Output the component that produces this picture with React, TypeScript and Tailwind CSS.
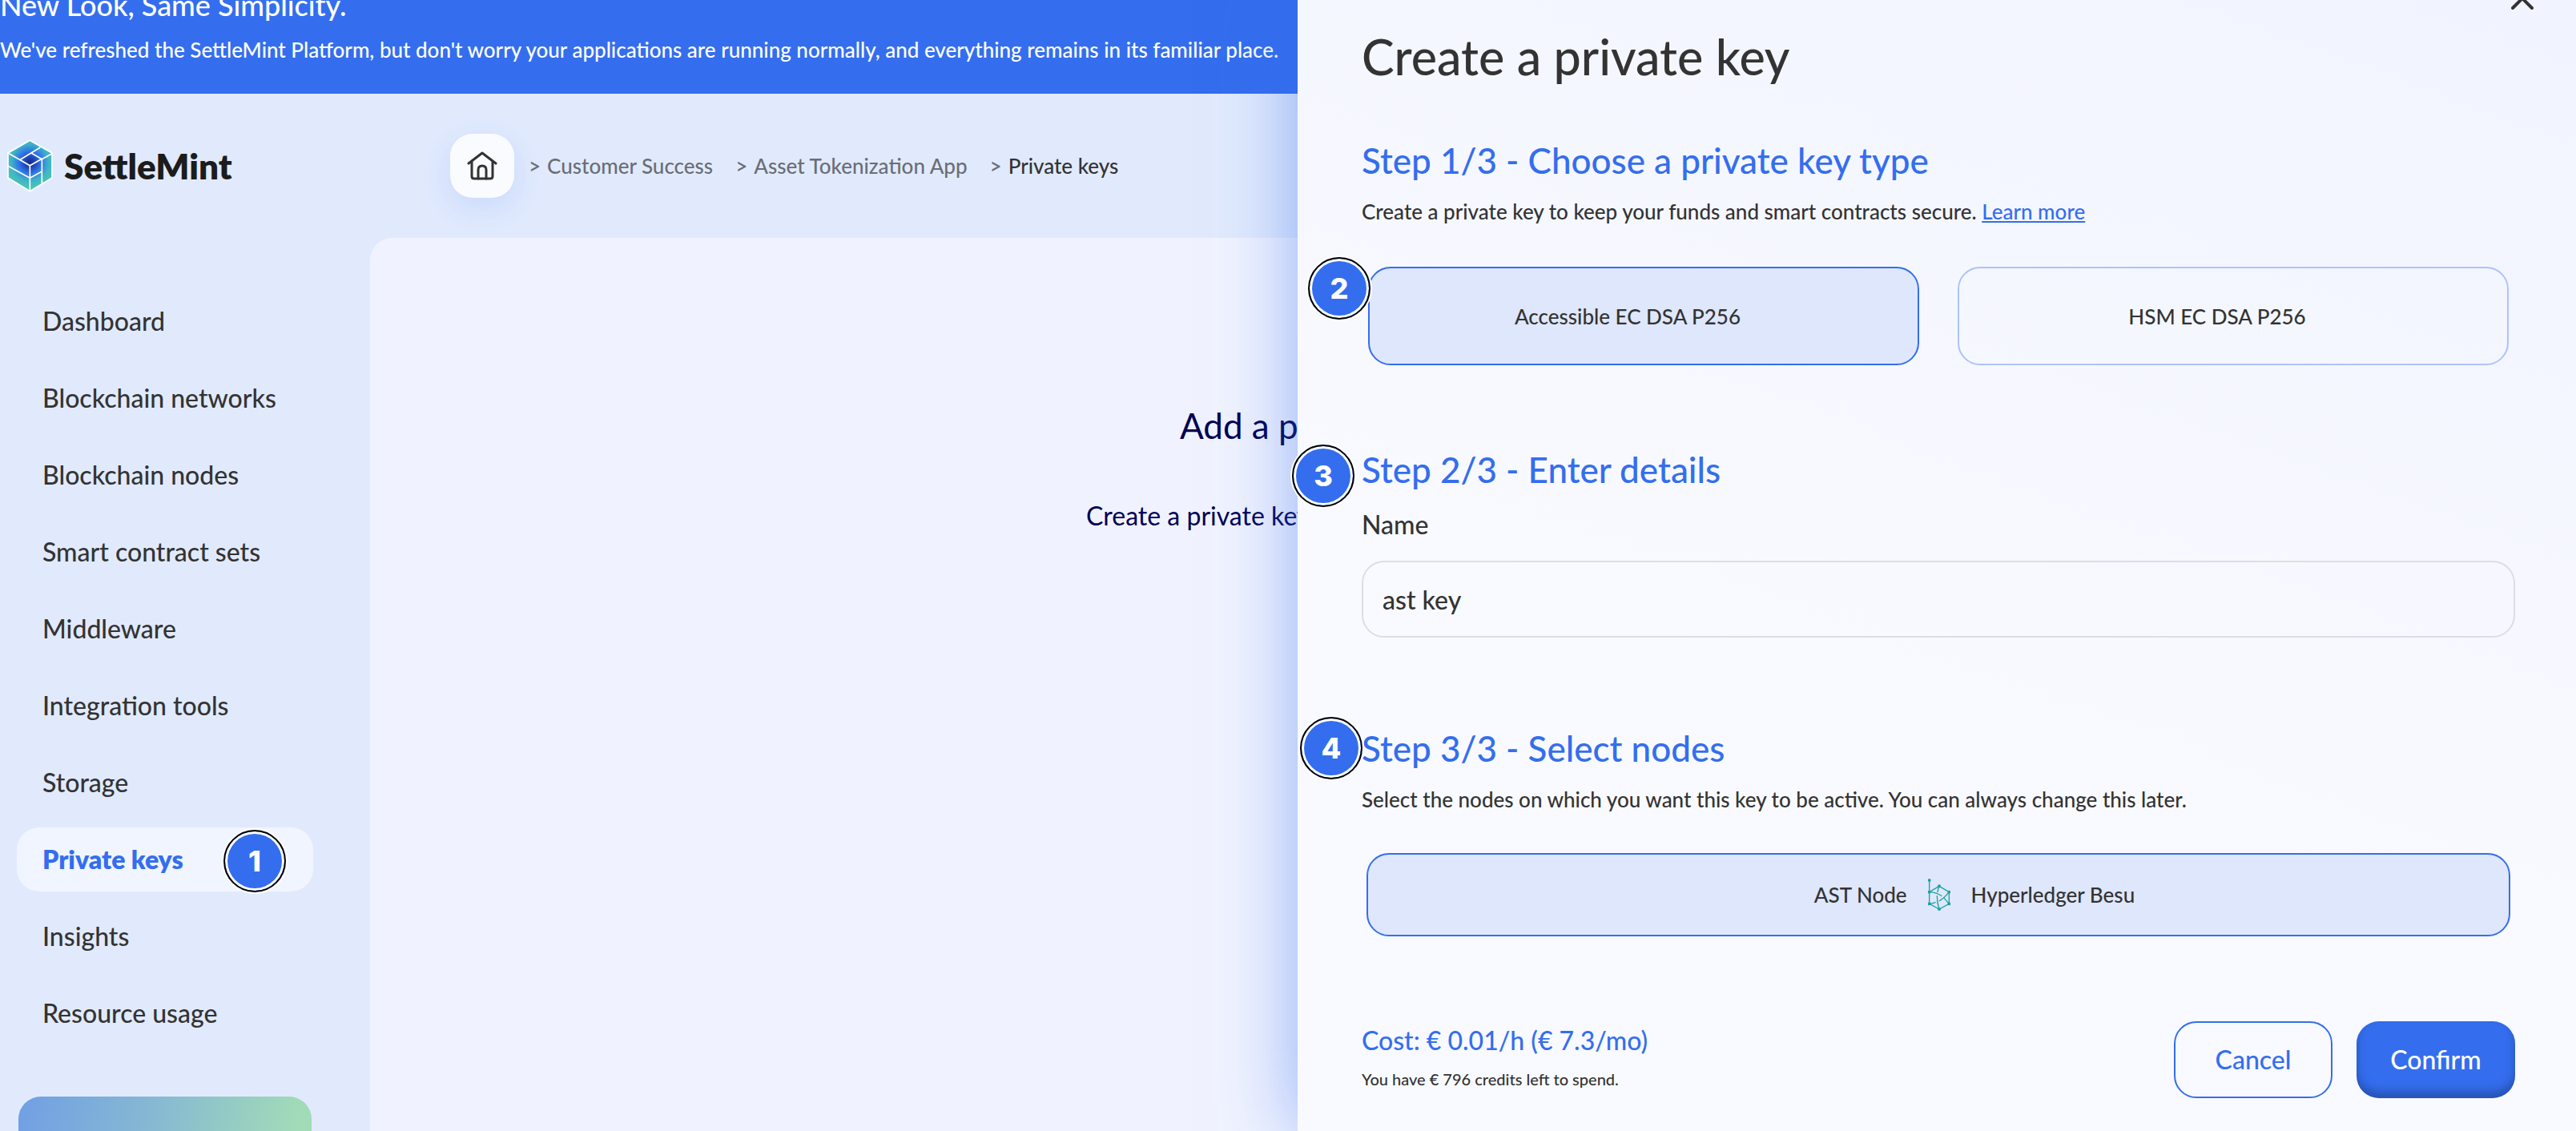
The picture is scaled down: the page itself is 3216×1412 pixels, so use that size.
import { useState } from "react";
import type { ReactNode } from "react";

const NAV = [
  "Dashboard",
  "Blockchain networks",
  "Blockchain nodes",
  "Smart contract sets",
  "Middleware",
  "Integration tools",
  "Storage",
  "Private keys",
  "Insights",
  "Resource usage",
];

function Badge({ n, className }: { n: number; className: string }) {
  return (
    <span
      className={`absolute z-10 flex size-[78px] items-center justify-center rounded-full border-2 border-black bg-[#346eee] font-[Inter,sans-serif] text-[36px] font-extrabold leading-none text-white shadow-[inset_0_0_0_3px_#fff,0_0_0_2px_#fff] ${className}`}
    >
      {n}
    </span>
  );
}

function LogoMark() {
  return (
    <svg viewBox="28 42 171 198" className="h-[66px] w-[57px]" aria-hidden="true">
      <defs>
        <radialGradient id="mark" gradientUnits="userSpaceOnUse" cx="113" cy="128" r="100">
          <stop offset="0" stopColor="#172a86" />
          <stop offset="0.2" stopColor="#1f46b8" />
          <stop offset="0.42" stopColor="#2f74e8" />
          <stop offset="0.7" stopColor="#3fb4c8" />
          <stop offset="1" stopColor="#4cc9ae" />
        </radialGradient>
      </defs>
      <path d="M113 46 196 93V186L113 236 31 186V93Z" fill="url(#mark)" />
      <g fill="none" stroke="#fff" strokeWidth="5" strokeLinejoin="round">
        <path d="M113 46 196 93V186L113 236 31 186V93Z" />
        <path d="M31 93 113 140 158 115V208M113 140V236M77 118 152 72M118 93 158 116 196 95M31 142 113 187 158 162" />
      </g>
    </svg>
  );
}

function HomeIcon() {
  return (
    <svg viewBox="0 0 38 36" className="h-9 w-[38px]" fill="none" stroke="#333" strokeWidth="3" strokeLinecap="round" strokeLinejoin="round" aria-hidden="true">
      <path d="M2 15 19 2 36 15" />
      <path d="M6 13V31Q6 34 9 34H29Q32 34 32 31V13" />
      <path d="M14 34V23Q14 18 19 18T24 23V34" />
    </svg>
  );
}

function BesuIcon() {
  return (
    <svg viewBox="78 54 84 118" className="h-10 w-7" fill="none" stroke="#1fa3a0" strokeWidth="4" aria-hidden="true">
      <path d="M83 59V147L120 167 157 147V103L120 81 83 103" />
      <path d="M83 103Q112 105 130 118M137 124 157 147" />
      <path d="M120 81Q115 92 114 104M112 116Q111 142 120 167" />
      <path d="M83 147Q98 145 107 141M119 137Q138 127 157 103" />
      <g fill="#1fa3a0" stroke="none">
        <circle cx="83" cy="59" r="6" />
        <circle cx="83" cy="103" r="6" />
        <circle cx="120" cy="81" r="6" />
        <circle cx="157" cy="103" r="6" />
        <circle cx="157" cy="147" r="6" />
        <circle cx="120" cy="167" r="6" />
        <circle cx="83" cy="147" r="6" />
      </g>
    </svg>
  );
}

function StepTitle({ children }: { children: ReactNode }) {
  return <h2 className="text-[44px] leading-[56px] font-medium text-[#346eee]">{children}</h2>;
}

function KeyType({ label, active, onClick }: { label: string; active: boolean; onClick: () => void }) {
  return (
    <button
      type="button"
      aria-pressed={active}
      onClick={onClick}
      className={`flex h-[123px] items-center justify-center rounded-[28px] border-2 pr-10 text-[26px] leading-[40px] font-medium ${
        active ? "border-[#346eee] bg-[#dfe7fc]" : "border-[#aec3f9]"
      }`}
    >
      {label}
    </button>
  );
}

export default function App() {
  const [name, setName] = useState("ast key");
  const [type, setType] = useState(0);

  return (
    <div className="relative flex min-h-screen flex-col overflow-hidden bg-[#e1eafd] font-[Lato,sans-serif] text-[#333]">
      <div className="overflow-hidden bg-[#346eee] pb-[35px] whitespace-nowrap text-white">
        <div className="-mt-[18px]">
          <h2 className="text-[36px] leading-[48px] font-medium">New Look, Same Simplicity.</h2>
          <p className="mt-3 text-[26px] leading-[40px] font-medium">
            We've refreshed the SettleMint Platform, but don't worry your applications are running normally, and everything remains in its familiar place.
          </p>
        </div>
      </div>

      <header className="flex h-[180px] items-center">
        <a href="#" className="flex w-[562px] items-center gap-[14px] pl-[9px]">
          <LogoMark />
          <span className="text-[44px] leading-[56px] font-extrabold text-[#1c1c1c]">SettleMint</span>
        </a>
        <a href="#" aria-label="Home" className="flex size-20 items-center justify-center rounded-[28px] bg-[#fafbff] shadow-[0_12px_40px_rgba(52,110,238,0.14)]">
          <HomeIcon />
        </a>
        <nav aria-label="Breadcrumb" className="ml-[18px] flex items-center gap-7 text-[26px] leading-[40px] font-medium text-[#6a6e76]">
          <span className="flex gap-2">
            <span>&gt;</span>
            <a href="#">Customer Success</a>
          </span>
          <span className="flex gap-2">
            <span>&gt;</span>
            <a href="#">Asset Tokenization App</a>
          </span>
          <span className="flex gap-2">
            <span>&gt;</span>
            <a href="#" className="text-[#333]">Private keys</a>
          </span>
        </nav>
      </header>

      <div className="flex flex-1">
        <aside className="flex w-[462px] shrink-0 flex-col pt-16 pr-[71px] pl-[21px]">
          <nav aria-label="Main" className="flex flex-col gap-4">
            {NAV.map((item) => {
              const active = item === "Private keys";
              return (
                <a
                  key={item}
                  href="#"
                  className={`relative flex h-20 items-center rounded-[28px] pl-8 text-[32px] leading-[48px] ${
                    active ? "bg-[#f1f5ff] font-extrabold text-[#346eee]" : "font-medium"
                  }`}
                >
                  {item}
                  {active && <Badge n={1} className="top-[3px] right-[34px]" />}
                </a>
              );
            })}
          </nav>
          <div className="mx-[2px] mt-16 min-h-[43px] flex-1 rounded-t-[28px] bg-[linear-gradient(100deg,#719fe4,#86b8d3_45%,#a1dbb8_95%)]" />
        </aside>
        <main className="flex-1 rounded-tl-[28px] bg-[#f0f3ff] pt-[206px] pl-[894px] whitespace-nowrap text-[#000054]">
          <h2 className="pl-[117px] text-[44px] leading-[56px]">Add a private key</h2>
          <p className="mt-[61px] text-[32px] leading-[48px]">Create a private key</p>
        </main>
      </div>

      <section
        role="dialog"
        aria-label="Create a private key"
        className="absolute inset-y-0 right-0 w-[1596px] bg-[linear-gradient(200deg,#f1f4ff,#f9faff_60%)] pt-[35px] pr-[76px] pl-20 shadow-[0_0_88px_rgba(52,110,238,0.5)]"
      >
        <button type="button" aria-label="Close" className="absolute -top-4 right-[53px]">
          <svg viewBox="0 0 28 28" className="size-7" stroke="#333" strokeWidth="4" strokeLinecap="round" aria-hidden="true">
            <path d="M2 2 26 26M26 2 2 26" />
          </svg>
        </button>
        <h1 className="text-[61px] leading-[72px] font-medium">Create a private key</h1>

        <div className="mt-[65px]">
          <StepTitle>Step 1/3 - Choose a private key type</StepTitle>
          <p className="mt-4 text-[26px] leading-[40px] font-medium">
            Create a private key to keep your funds and smart contracts secure.{" "}
            <a href="#" className="text-[#346eee] underline">Learn more</a>
          </p>
          <div className="relative mt-[49px] grid grid-cols-2 gap-12 px-2">
            <Badge n={2} className="-top-3 -left-[67px]" />
            <KeyType label="Accessible EC DSA P256" active={type === 0} onClick={() => setType(0)} />
            <KeyType label="HSM EC DSA P256" active={type === 1} onClick={() => setType(1)} />
          </div>
        </div>

        <div className="relative mt-[102px]">
          <Badge n={3} className="-top-[3px] -left-[87px]" />
          <StepTitle>Step 2/3 - Enter details</StepTitle>
          <label htmlFor="key-name" className="mt-[17px] block text-[32px] leading-[48px] font-medium">Name</label>
          <input
            id="key-name"
            value={name}
            onChange={(e) => setName(e.target.value)}
            className="mt-[21px] block h-24 w-full rounded-[28px] border-2 border-[#dcdee4] bg-transparent px-6 text-[32px] font-medium outline-none"
          />
        </div>

        <div className="relative mt-[110px]">
          <Badge n={4} className="-top-[11px] -left-[77px]" />
          <StepTitle>Step 3/3 - Select nodes</StepTitle>
          <p className="mt-4 text-[26px] leading-[40px] font-medium">
            Select the nodes on which you want this key to be active. You can always change this later.
          </p>
          <div className="mt-[47px] px-[6px]">
            <button type="button" aria-pressed="true" className="flex h-[104px] w-full items-center justify-center gap-[26px] rounded-[28px] border-2 border-[#346eee] bg-[#dfe7fc] pl-[90px] text-[26px] leading-[40px] font-medium">
              <span>AST Node</span>
              <BesuIcon />
              <span>Hyperledger Besu</span>
            </button>
          </div>
        </div>

        <footer className="mt-[106px] flex items-start justify-between">
          <div>
            <p className="text-[32px] leading-[48px] font-medium text-[#346eee]">Cost: € 0.01/h (€ 7.3/mo)</p>
            <p className="mt-2 text-[20px] leading-8 font-medium">You have € 796 credits left to spend.</p>
          </div>
          <div className="flex gap-[30px] text-[32px] font-medium">
            <button type="button" className="h-24 w-[198px] rounded-[28px] border-2 border-[#346eee] text-[#346eee]">Cancel</button>
            <button type="button" className="h-24 w-[198px] rounded-[28px] bg-[#346eee] text-white shadow-[inset_0_-8px_12px_rgba(20,40,90,0.4)]">Confirm</button>
          </div>
        </footer>
      </section>
    </div>
  );
}
